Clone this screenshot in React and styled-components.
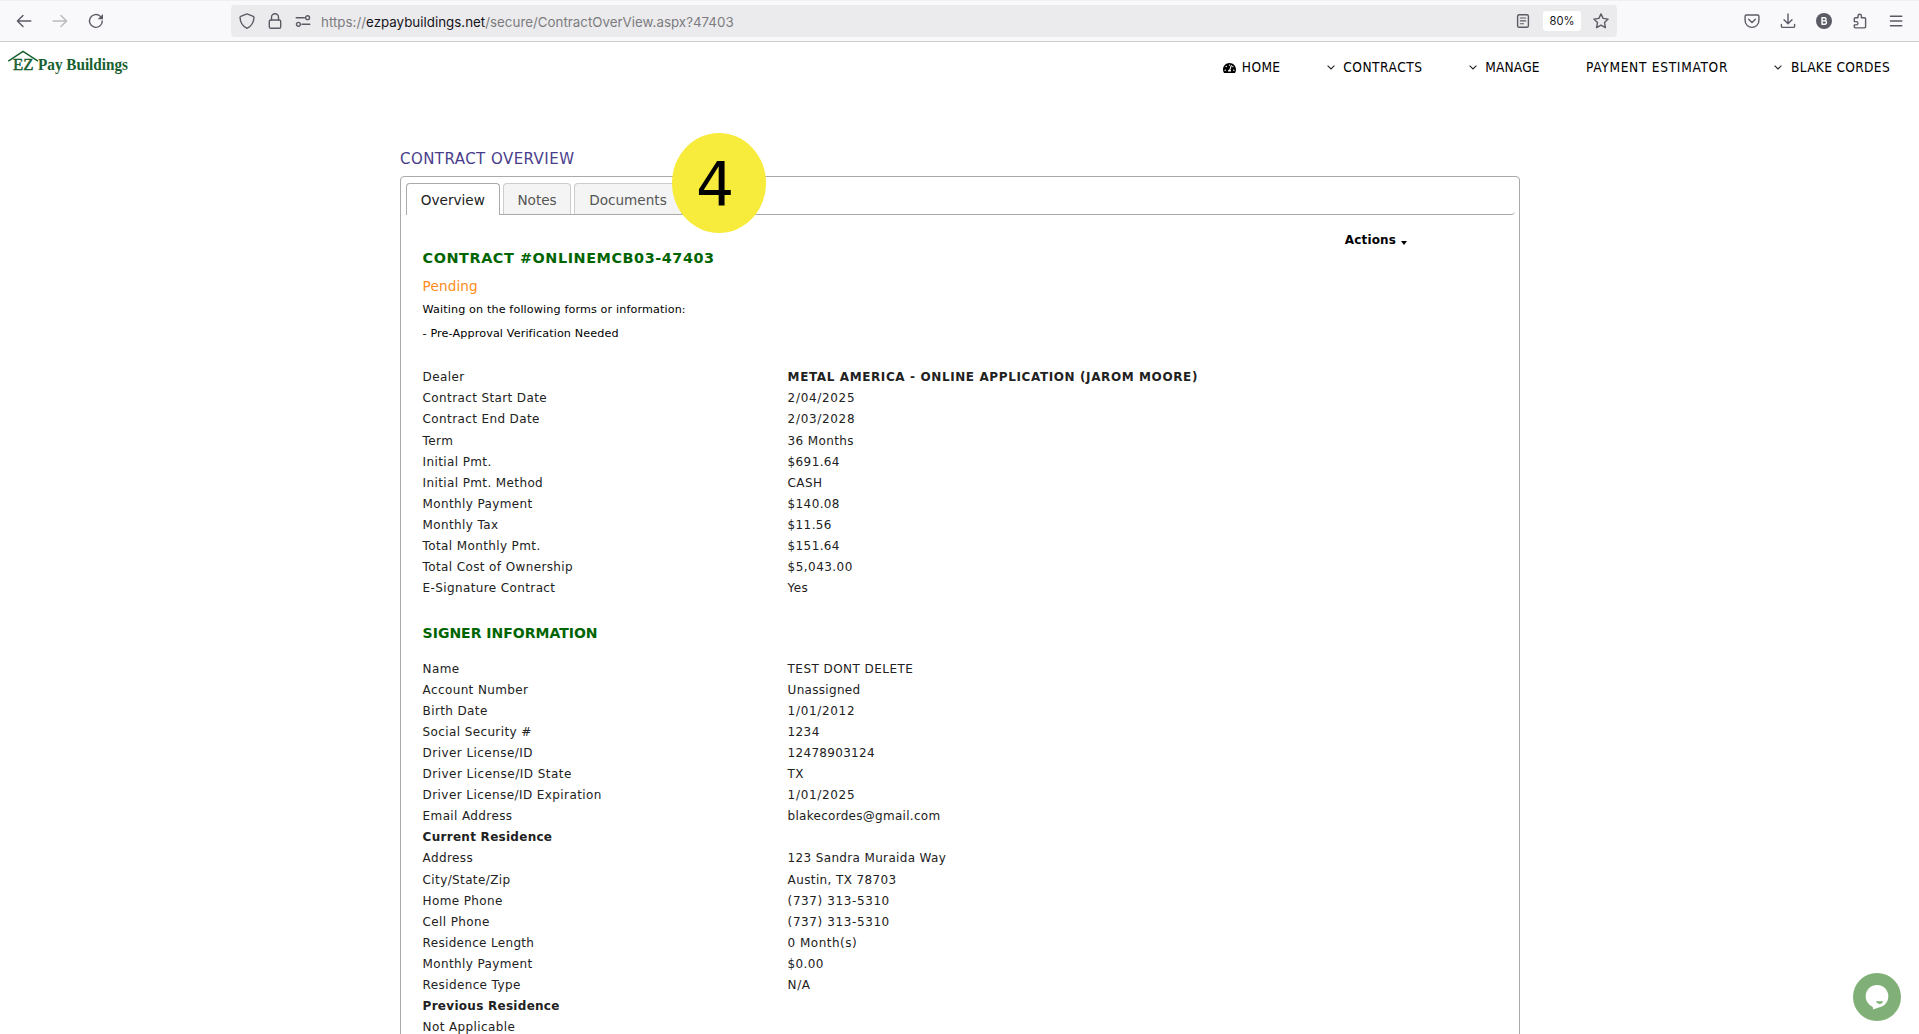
import React from 'react';
import styled, { createGlobalStyle, css } from 'styled-components';
import { FaTachometerAlt } from 'react-icons/fa';

const GlobalStyle = createGlobalStyle`
  * { box-sizing: border-box; }
  html, body { margin: 0; padding: 0; }
  body {
    background: #fff;
    overflow: hidden;
    font-family: "DejaVu Sans", Verdana, sans-serif;
  }
`;

const Screen = styled.div`
  width: 100%;
  height: 1034px;
  overflow: hidden;
  display: flex;
  flex-direction: column;
`;

/* Browser toolbar */
const Toolbar = styled.header`
  flex: none;
  height: 42px;
  display: flex;
  align-items: center;
  padding-right: 15px;
  background: #f9f9fb;
  border-top: 1px solid #f0f0f3;
  border-bottom: 1px solid #cccccf;
`;

const NavButtons = styled.div`
  flex: none;
  width: 231px;
  padding-left: 16px;
  display: flex;
  gap: 20px;
`;

const Glyph = styled.svg`
  flex: none;
  display: block;
  width: 16px;
  height: 16px;
  fill: none;
  stroke: #5b5b66;
  stroke-width: 1.4;
  stroke-linecap: round;
  stroke-linejoin: round;
  opacity: ${(p) => (p.$dim ? 0.4 : 1)};
`;

const AddressBar = styled.div`
  flex: none;
  width: 1386px;
  height: 32px;
  padding: 0 8px;
  display: flex;
  align-items: center;
  gap: 12px;
  border-radius: 4px;
  background: #ebebed;
`;

const Url = styled.div`
  flex: 1;
  margin: 2px 0 0 -2px;
  font: 13.33px/20px Inter, sans-serif;
  letter-spacing: 0.015px;
  color: #7c7c80;
  b { font-weight: 400; color: #15141a; }
`;

const ZoomLevel = styled.div`
  width: 38px;
  height: 20px;
  border-radius: 3px;
  background: #fff;
  color: #15141a;
  font: 11.2px/20px Inter, sans-serif;
  text-align: center;
`;

const ToolbarActions = styled.div`
  flex: 1;
  display: flex;
  justify-content: flex-end;
  gap: 20px;
`;

/* Site header */
const SiteHeader = styled.div`
  flex: none;
  height: 108px;
  display: flex;
  justify-content: space-between;
  align-items: flex-start;
  padding: 6px 29px 0 6px;
`;

const Logo = styled.svg`
  display: block;
  width: 130px;
  height: 30px;
  overflow: visible;
  font-family: "Liberation Serif", "Times New Roman", serif;
  font-size: 16.5px;
`;

const Menu = styled.nav`
  display: flex;
  gap: 46.3px;
  padding-top: 9px;
`;

const MenuItem = styled.a`
  display: flex;
  align-items: center;
  height: 20px;
  color: #000;
  font: 13.6px/20px "DejaVu Sans Condensed", "DejaVu Sans", Tahoma, sans-serif;
  font-stretch: condensed;
  letter-spacing: ${(p) => p.$track}px;
  white-space: nowrap;
  svg.gauge { width: 13px; height: 12px; margin: 2px 6px 0 0; }
`;

const Chevron = styled.svg`
  width: 8px;
  height: 5px;
  margin: 1px 8.5px 0 0;
  fill: none;
  stroke: #222;
  stroke-width: 1.1;
`;

/* Contract page */
const Page = styled.main`
  width: 1120px;
  margin-left: 400px;
`;

const PageTitle = styled.h1`
  margin: 0;
  height: 26px;
  font-size: 15px;
  font-weight: 400;
  line-height: 18px;
  letter-spacing: 0.45px;
  color: #483d8b;
`;

const Panel = styled.section`
  height: 900px;
  padding: 6px 4px 0 5px;
  border: 1px solid #aaa;
  border-radius: 4px;
`;

const TabBar = styled.div`
  display: flex;
  gap: 3px;
  height: 32px;
  align-items: flex-start;
  border-bottom: 1px solid #aaa;
  border-radius: 0 0 4px 4px;
`;

const Tab = styled.div`
  height: 31px;
  padding: 0 13.8px;
  border: 1px solid #ccc;
  border-bottom: 0;
  border-radius: 4px 4px 0 0;
  background: #f4f4f4;
  color: #555;
  font-size: 13.6px;
  line-height: 32px;
  ${(p) =>
    p.$active &&
    css`
      height: 32px;
      border-color: #aaa;
      background: #fff;
      color: #212121;
    `}
`;

const Body = styled.div`
  padding: 0 16px 0 16.6px;
`;

const TopRow = styled.div`
  display: flex;
  justify-content: flex-end;
  height: 33px;
  padding: 16px 92px 0 0;
`;

const ActionsMenu = styled.div`
  display: flex;
  align-items: center;
  gap: 5px;
  height: 17px;
  font-size: 12px;
  font-weight: 700;
  letter-spacing: 0.14px;
  color: #000;
`;

const Caret = styled.span`
  margin-top: 6px;
  border: solid transparent;
  border-width: 4px 3.5px 0;
  border-top-color: #000;
`;

const Heading = styled.h2`
  margin: ${(p) => p.$top || 0}px 0 0;
  font-size: ${(p) => p.$size}px;
  font-weight: 700;
  line-height: 20px;
  letter-spacing: ${(p) => p.$track}px;
  color: #006400;
`;

const Status = styled.div`
  margin: 9px 0 3px;
  font-size: 13.6px;
  line-height: 18px;
  letter-spacing: 0.12px;
  color: #ff8c1a;
`;

const Note = styled.div`
  height: 24px;
  font-size: 11.2px;
  line-height: 24px;
  letter-spacing: 0.12px;
  color: #000;
`;

const Details = styled.dl`
  margin: ${(p) => p.$top}px 0 0;
`;

const Row = styled.div`
  display: grid;
  grid-template-columns: 365px 1fr;
  height: ${(p) => (p.$tall ? 22 : 21)}px;
  font-size: 12px;
  line-height: 21px;
  color: #212121;
`;

const Cell = styled.div`
  white-space: nowrap;
  letter-spacing: ${(p) => p.$track ?? 0.38}px;
  font-weight: ${(p) => (p.$bold ? 700 : 400)};
`;

/* Overlays */
const StepBadge = styled.div`
  position: absolute;
  left: 672px;
  top: 133px;
  width: 94px;
  height: 100px;
  border-radius: 50%;
  background: #f7eb3b;
  color: #000;
  font-size: 60px;
  line-height: 102px;
  text-align: center;
  padding-right: 8px;
`;

const ChatButton = styled.svg`
  position: absolute;
  left: 1853px;
  top: 973px;
  width: 48px;
  height: 48px;
`;

const contractRows = [
  { label: 'Dealer', value: 'METAL AMERICA - ONLINE APPLICATION (JAROM MOORE)', strong: true, valueTrack: 0.61 },
  { label: 'Contract Start Date', value: '2/04/2025', valueTrack: 0.68 },
  { label: 'Contract End Date', value: '2/03/2028', valueTrack: 0.68, tall: true },
  { label: 'Term', value: '36 Months' },
  { label: 'Initial Pmt.', value: '$691.64' },
  { label: 'Initial Pmt. Method', value: 'CASH' },
  { label: 'Monthly Payment', value: '$140.08' },
  { label: 'Monthly Tax', value: '$11.56' },
  { label: 'Total Monthly Pmt.', value: '$151.64' },
  { label: 'Total Cost of Ownership', value: '$5,043.00', valueTrack: 0.46 },
  { label: 'E-Signature Contract', value: 'Yes' },
];

const signerRows = [
  { label: 'Name', value: 'TEST DONT DELETE', valueTrack: 0.45 },
  { label: 'Account Number', value: 'Unassigned', valueTrack: 0.3 },
  { label: 'Birth Date', value: '1/01/2012', valueTrack: 0.68 },
  { label: 'Social Security #', value: '1234' },
  { label: 'Driver License/ID', value: '12478903124', labelTrack: 0.44, valueTrack: 0.3 },
  { label: 'Driver License/ID State', value: 'TX', labelTrack: 0.47 },
  { label: 'Driver License/ID Expiration', value: '1/01/2025', labelTrack: 0.42, valueTrack: 0.68 },
  { label: 'Email Address', value: 'blakecordes@gmail.com', valueTrack: 0.28 },
  { label: 'Current Residence', title: true },
  { label: 'Address', value: '123 Sandra Muraida Way', valueTrack: 0.35, tall: true },
  { label: 'City/State/Zip', value: 'Austin, TX 78703' },
  { label: 'Home Phone', value: '(737) 313-5310', valueTrack: 0.6 },
  { label: 'Cell Phone', value: '(737) 313-5310', valueTrack: 0.6 },
  { label: 'Residence Length', value: '0 Month(s)', labelTrack: 0.32, valueTrack: 0.48 },
  { label: 'Monthly Payment', value: '$0.00' },
  { label: 'Residence Type', value: 'N/A', valueTrack: 0.6 },
  { label: 'Previous Residence', title: true },
  { label: 'Not Applicable' },
];

const DetailList = ({ rows, top }) => (
  <Details $top={top}>
    {rows.map((r, i) => (
      <Row key={i} $tall={r.tall}>
        <Cell $bold={r.title} $track={r.title ? 0.28 : r.labelTrack}>{r.label}</Cell>
        <Cell $bold={r.strong} $track={r.valueTrack}>{r.value}</Cell>
      </Row>
    ))}
  </Details>
);

const MenuChevron = () => (
  <Chevron viewBox="0 0 8 5"><path d="M.6 .7 4 4 7.4 .7" /></Chevron>
);

export default function App() {
  return (
    <>
      <GlobalStyle />
      <Screen>
        <Toolbar>
          <NavButtons>
            <Glyph viewBox="0 0 16 16"><path d="M14.8 8H1.6M7 2.4 1.4 8 7 13.6" /></Glyph>
            <Glyph viewBox="0 0 16 16" $dim><path d="M1.2 8h13.2M9 2.4 14.6 8 9 13.6" /></Glyph>
            <Glyph viewBox="0 0 16 16">
              <path d="M14.3 8A6.4 6.4 0 1 1 12.2 3.2" />
              <path d="M15 .9v5.3H9.7z" fill="#5b5b66" stroke="none" />
            </Glyph>
          </NavButtons>
          <AddressBar>
            <Glyph viewBox="0 0 16 16">
              <path d="M8 .9 14.3 3.3c.5.2.7.5.7 1C14.8 9.3 12.5 13.2 8 15.3 3.5 13.2 1.2 9.3 1 4.3c0-.5.2-.8.7-1z" />
            </Glyph>
            <Glyph viewBox="0 0 16 16">
              <rect x="2.3" y="7" width="11.4" height="8.3" rx="1.6" />
              <path d="M4.5 7V4.3a3.5 3.5 0 0 1 7 0V7" />
            </Glyph>
            <Glyph viewBox="0 0 16 16">
              <path d="M1.2 4.7h8.2M7 11.3h7.8" />
              <circle cx="12.6" cy="4.7" r="1.9" />
              <circle cx="3.4" cy="11.3" r="1.9" />
            </Glyph>
            <Url>https://<b>ezpaybuildings.net</b>/secure/ContractOverView.aspx?47403</Url>
            <Glyph viewBox="0 0 16 16">
              <rect x="2.6" y="1.7" width="10.8" height="12.6" rx="1.6" />
              <path d="M5.3 5h5.4M5.3 7.900h5.400M5.300 10.800h3.200" strokeWidth="1.1" />
            </Glyph>
            <ZoomLevel>80%</ZoomLevel>
            <Glyph viewBox="0 0 16 16">
              <path d="m8 .9 2.100 4.500 5 .7-3.600 3.500.9 5L8 12.200l-4.400 2.400.9-5L.9 6.100l5-.7z" />
            </Glyph>
          </AddressBar>
          <ToolbarActions>
            <Glyph viewBox="0 0 16 16">
              <path d="M2.300 2h11.400c.7 0 1.200.5 1.200 1.200v4.300a6.900 6.900 0 0 1-13.800 0V3.200C1.100 2.500 1.600 2 2.300 2z" />
              <path d="M4.600 6.200 8 9.400l3.400-3.200" />
            </Glyph>
            <Glyph viewBox="0 0 16 16"><path d="M8 1v9.600M4 6.800l4 4 4-4M1.400 11.400v1.800c0 .7.500 1.200 1.200 1.200h10.800c.7 0 1.200-.5 1.200-1.200v-1.800" /></Glyph>
            <Glyph viewBox="0 0 16 16">
              <circle cx="8" cy="8" r="8" fill="#5b5b66" stroke="none" />
              <path d="M6 4.800h2.500a1.500 1.500 0 0 1 0 3.100H6zM6 7.900h2.900a1.600 1.600 0 0 1 0 3.300H6z" stroke="#fff" />
            </Glyph>
            <Glyph viewBox="0 0 16 16">
              <path d="M2.300 8.600V5.800c0-.7.400-1.100 1.100-1.100h2.600V2.900a1.700 1.700 0 0 1 3.400 0v1.800h3.100c.7 0 1.100.4 1.100 1.100v8c0 .7-.4 1.100-1.100 1.100H3.400c-.7 0-1.100-.4-1.100-1.100v-1.900h2a1.650 1.650 0 0 0 0-3.300z" />
            </Glyph>
            <Glyph viewBox="0 0 16 16"><path d="M2.400 3.300h11.400M2.400 8h11.400M2.400 12.700h11.400" /></Glyph>
          </ToolbarActions>
        </Toolbar>

        <SiteHeader>
          <Logo viewBox="6 48 130 30">
            <path d="M8.300 61.200 23 51.300 38 61.200" fill="none" stroke="#17602f" strokeWidth="1.5" />
            <text x="13" y="70.4" fill="#17602f" stroke="#17602f" strokeWidth="0.5" textLength="20.5" lengthAdjust="spacingAndGlyphs">EZ</text>
            <text x="38" y="70.4" fill="#17602f" fontWeight="700" textLength="90" lengthAdjust="spacingAndGlyphs">Pay Buildings</text>
          </Logo>
          <Menu>
            <MenuItem $track={0.4}><FaTachometerAlt className="gauge" />HOME</MenuItem>
            <MenuItem $track={0.5}><MenuChevron />CONTRACTS</MenuItem>
            <MenuItem $track={0.18}><MenuChevron />MANAGE</MenuItem>
            <MenuItem $track={0.71}>PAYMENT ESTIMATOR</MenuItem>
            <MenuItem $track={0.33}><MenuChevron />BLAKE CORDES</MenuItem>
          </Menu>
        </SiteHeader>

        <Page>
          <PageTitle>CONTRACT OVERVIEW</PageTitle>
          <Panel>
            <TabBar>
              <Tab $active>Overview</Tab>
              <Tab>Notes</Tab>
              <Tab>Documents</Tab>
            </TabBar>
            <Body>
              <TopRow>
                <ActionsMenu>Actions<Caret /></ActionsMenu>
              </TopRow>
              <Heading $size={14.4} $track={0.56}>CONTRACT #ONLINEMCB03-47403</Heading>
              <Status>Pending</Status>
              <Note>Waiting on the following forms or information:</Note>
              <Note>- Pre-Approval Verification Needed</Note>
              <DetailList rows={contractRows} top={21} />
              <Heading $top={24} $size={14} $track={0}>SIGNER INFORMATION</Heading>
              <DetailList rows={signerRows} top={16} />
            </Body>
          </Panel>
        </Page>
      </Screen>
      <StepBadge>4</StepBadge>
      <ChatButton viewBox="0 0 48 48">
        <circle cx="24" cy="24" r="24" fill="#80b077" />
        <circle cx="24" cy="23.2" r="11.3" fill="#fff" />
        <path d="M17.500 31.500c1.800.9 2.600 2 2.500 4.700 3.300-.6 6.300-2 8.800-4z" fill="#fff" />
        <path d="M23 28.200h7.200c-.6 1.900-1.900 2.700-3.500 2.700s-3-.8-3.700-2.700z" fill="#80b077" />
      </ChatButton>
    </>
  );
}
